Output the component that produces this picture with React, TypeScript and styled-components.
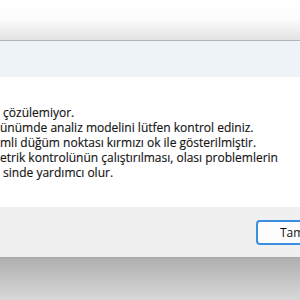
import styled, { createGlobalStyle } from 'styled-components';

const GlobalStyle = createGlobalStyle`
    html, body {
        margin: 0;
        padding: 0;
        background: #ffffff;
    }
    #root {
        width: 300px;
        height: 300px;
        overflow: hidden;
    }
`;

const lines = [
    ' çözülemiyor.',
    'ünümde analiz modelini lütfen kontrol ediniz.',
    'mli düğüm noktası kırmızı ok ile gösterilmiştir.',
    'etrik kontrolünün çalıştırılması, olası problemlerin',
    ' sinde yardımcı olur.',
];

const App = () => (
    <Page>
        <GlobalStyle />
        <BackdropTop />
        <Dialog>
            <TitleBar />
            <Content>
                {lines.map((line) => (
                    <Line key={line}>{line}</Line>
                ))}
            </Content>
            <Footer>
                <Button>Tamam</Button>
            </Footer>
        </Dialog>
        <BackdropBottom />
    </Page>
);

export default App;

const Page = styled.div`
    width: 300px;
    height: 300px;
    display: flex;
    flex-direction: column;
    font-family: 'Open Sans', 'Noto Sans', sans-serif;
`;

const BackdropTop = styled.div`
    height: 40px;
    flex-shrink: 0;
    background: linear-gradient(to bottom, #ffffff 0%, #fbfbfb 50%, #e3e3e3 100%);
`;

const Dialog = styled.div`
    display: flex;
    flex-direction: column;
    flex-shrink: 0;
    border-top: 1px solid #b5b5b5;
    border-bottom: 1px solid #a8a8a8;
`;

const TitleBar = styled.div`
    height: 36px;
    background: #eef3f7;
`;

const Content = styled.div`
    height: 130px;
    box-sizing: border-box;
    padding: 28px 0 0 0;
    background: #ffffff;
    display: flex;
    flex-direction: column;
`;

const Line = styled.div`
    font-size: 12px;
    line-height: 15px;
    color: #141414;
    white-space: pre;
    -webkit-text-stroke: 0.15px #141414;
`;

const Footer = styled.div`
    height: 50px;
    background: #f0f0f0;
    display: flex;
    align-items: center;
    justify-content: flex-end;
`;

const Button = styled.button`
    width: 90px;
    height: 25px;
    margin-right: -46px;
    flex-shrink: 0;
    box-sizing: border-box;
    border: 2px solid #3b8ee0;
    border-radius: 4px;
    background: #fdfdfd;
    font-family: inherit;
    font-size: 12px;
    color: #111;
    padding: 0;
`;

const BackdropBottom = styled.div`
    flex: 1;
    background: linear-gradient(to bottom, #afafaf 0%, #d8d8d8 100%);
`;
